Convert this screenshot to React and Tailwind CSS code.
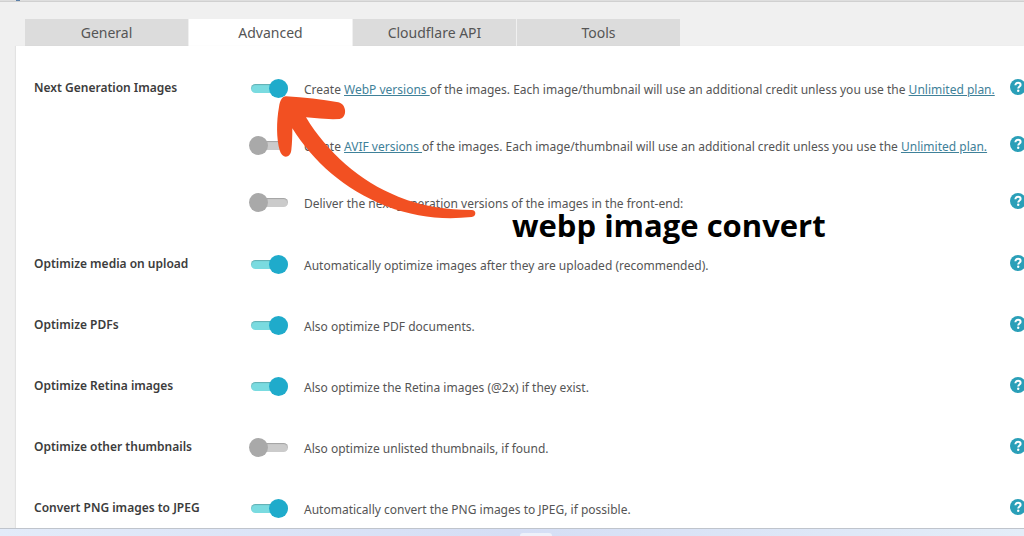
import { useId, useState } from 'react';
import clsx from 'clsx';

const tabs = ['General', 'Advanced', 'Cloudflare API', 'Tools'];

const settings = [
  { title: 'Optimize media on upload', text: 'Automatically optimize images after they are uploaded (recommended).', on: true },
  { title: 'Optimize PDFs', text: 'Also optimize PDF documents.', on: true },
  { title: 'Optimize Retina images', text: 'Also optimize the Retina images (@2x) if they exist.', on: true },
  { title: 'Optimize other thumbnails', text: 'Also optimize unlisted thumbnails, if found.', on: false },
  { title: 'Convert PNG images to JPEG', text: 'Automatically convert the PNG images to JPEG, if possible.', on: true },
];

function TextLink({ children }) {
  return (
    <a href="#" className="text-[#3f8199] underline underline-offset-1">
      {children}
    </a>
  );
}

function HelpButton() {
  return (
    <button
      type="button"
      aria-label="Help"
      className="-mr-0.5 mb-1 flex size-4 shrink-0 items-center justify-center rounded-full bg-[#2a9fb8] text-white"
    >
      <svg viewBox="0 0 16 16" className="size-4" fill="none" stroke="currentColor" strokeWidth="2">
        <path d="M5.4 6.3C5.4 4.6 6.5 3.8 8 3.8s2.6.8 2.6 2.1C10.6 7.5 8.2 7.6 8.2 9.6" />
        <circle cx="8.2" cy="11.8" r="1.2" fill="currentColor" stroke="none" />
      </svg>
    </button>
  );
}

function Toggle({ id, defaultChecked }) {
  return (
    <input
      id={id}
      type="checkbox"
      defaultChecked={defaultChecked}
      className="relative h-[9px] w-[37px] shrink-0 appearance-none rounded-full bg-[#cbcbcb] shadow-[inset_0_1px_1px_rgba(0,0,0,0.2)] before:absolute before:-top-[5px] before:-left-0.5 before:size-[19px] before:rounded-full before:bg-[#a9a9a9] checked:bg-[#7adbe0] checked:before:left-[18px] checked:before:bg-[#1fabcb]"
    />
  );
}

function Option({ on, className, children }) {
  const id = useId();
  return (
    <div className={clsx('flex items-center', className)}>
      <Toggle id={id} defaultChecked={on} />
      <label htmlFor={id} className="ml-4 flex-1 pt-0.5 whitespace-nowrap">
        {children}
      </label>
      <HelpButton />
    </div>
  );
}

function Arrow() {
  return (
    <svg
      viewBox="138 75 603 375"
      className="pointer-events-none absolute top-[95px] left-[276px] h-[125px] w-[201px]"
      fill="#f25022"
      aria-hidden="true"
    >
      <path d="M168 79 Q250 84 325 97 C350 102 353 143 329 147 Q285 149 228 142 C290 245 390 335 505 380 C580 410 650 419 725 420 Q736 421 736 430 Q736 439 725 441 C640 450 555 442 470 409 C340 357 250 275 187 175 Q187 215 184 240 C181 266 156 267 149 241 C139 205 139 155 147 111 C150 91 156 80 168 79Z" />
    </svg>
  );
}

export default function App() {
  const [active, setActive] = useState('Advanced');

  return (
    <div className="relative flex h-screen flex-col overflow-hidden bg-[#f0f0f0] font-['Noto_Sans',sans-serif] text-[12px] text-[#555]">
      <header className="h-0.5 shrink-0 border-b border-[#d0d0d0] bg-[#dedede]">
        <div className="ml-4 h-px w-1 bg-[#5b7fa8]" />
      </header>

      <nav className="mt-[17px] ml-[25px] flex shrink-0 gap-px">
        {tabs.map((tab) => (
          <button
            key={tab}
            type="button"
            onClick={() => setActive(tab)}
            className={clsx(
              'h-[27px] w-[163px] text-[14px] leading-5',
              tab === active ? 'bg-white' : 'bg-[#dcdcdc]',
            )}
          >
            {tab}
          </button>
        ))}
      </nav>

      <main className="ml-4 min-h-0 flex-1 overflow-hidden bg-white pt-3.5 pl-[18px] shadow-[-1px_0_1px_rgba(0,0,0,0.05)]">
        <section className="flex pb-[3px]">
          <h2 className="flex h-[57px] w-[217px] shrink-0 items-center pb-0.5 font-semibold text-[#3c3c3c]">
            Next Generation Images
          </h2>
          <div className="flex-1">
            <Option on className="h-[57px]">
              Create <TextLink>WebP versions </TextLink>of the images. Each image/thumbnail will use an additional
              credit unless you use the <TextLink>Unlimited plan.</TextLink>
            </Option>
            <Option className="h-[57px]">
              Create <TextLink>AVIF versions </TextLink>of the images. Each image/thumbnail will use an additional
              credit unless you use the <TextLink>Unlimited plan.</TextLink>
            </Option>
            <Option className="h-[57px]">Deliver the next generation versions of the images in the front-end:</Option>
          </div>
        </section>

        {settings.map(({ title, text, on }) => (
          <section key={title} className="flex h-[61px] items-center">
            <h2 className="w-[217px] shrink-0 pb-0.5 font-semibold text-[#3c3c3c]">{title}</h2>
            <Option on={on} className="flex-1">
              {text}
            </Option>
          </section>
        ))}
      </main>

      <footer className="flex h-2 shrink-0 justify-center border-t border-[#bfc4cc] bg-linear-to-r from-[#e3ebf9] via-[#d5def5] to-[#e4edf8] pt-1">
        <div className="ml-12 w-8 rounded-t-sm bg-[#eef1fa]" />
      </footer>

      {/* callout over the first toggle */}
      <Arrow />
      <p className="pointer-events-none absolute top-[205px] left-[512px] font-['Open_Sans',sans-serif] text-[31px] leading-10 font-bold whitespace-nowrap text-black">
        webp image convert
      </p>
    </div>
  );
}
